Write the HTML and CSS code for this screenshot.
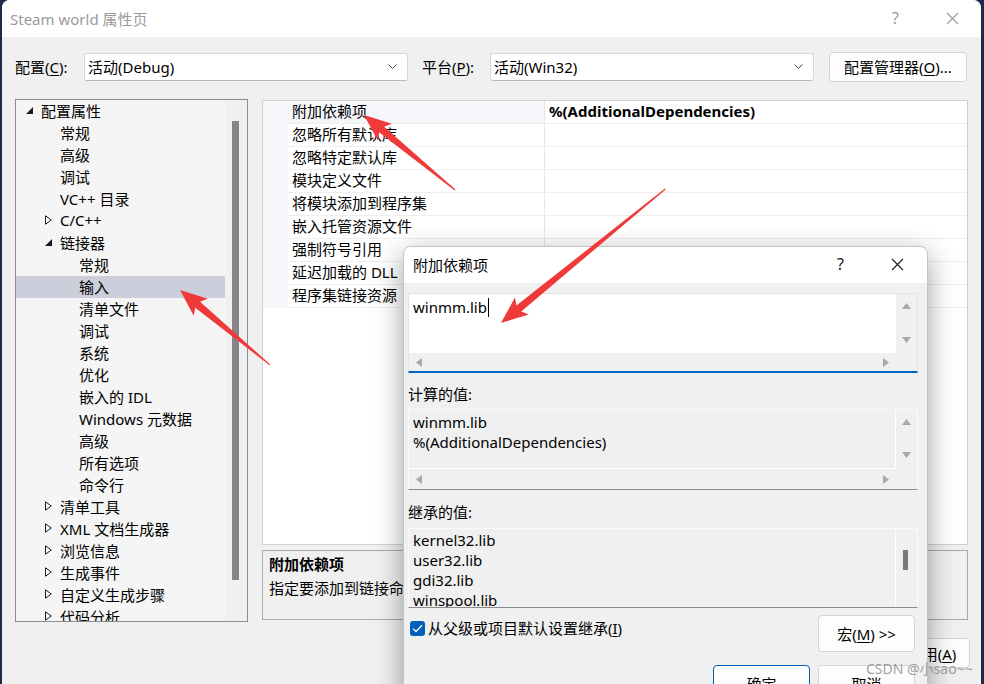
FILE: index.html
```html
<!DOCTYPE html>
<html>
<head>
<meta charset="utf-8">
<link rel="stylesheet" href="styles.css">
</head>
<body>
<div class="window">
  <div class="titlebar">
    <span class="title">Steam world 属性页</span>
    <div class="caption">
      <span class="cap-btn">?</span>
      <span class="cap-btn"><svg width="13" height="13" viewBox="0 0 13 13"><path d="M1 1 L12 12 M12 1 L1 12" stroke="currentColor" stroke-width="1.1" fill="none"/></svg></span>
    </div>
  </div>

  <div class="config-row">
    <span class="lbl lbl-cfg">配置(<u>C</u>):</span>
    <div class="combo"><span>活动(Debug)</span><svg class="chev" width="9" height="5" viewBox="0 0 9 5"><path d="M0.5 0.5 L4.5 4.5 L8.5 0.5" stroke="#444" stroke-width="1" fill="none"/></svg></div>
    <span class="lbl lbl-plat">平台(<u>P</u>):</span>
    <div class="combo"><span>活动(Win32)</span><svg class="chev" width="9" height="5" viewBox="0 0 9 5"><path d="M0.5 0.5 L4.5 4.5 L8.5 0.5" stroke="#444" stroke-width="1" fill="none"/></svg></div>
    <button class="btn btn-mgr">配置管理器(<u>O</u>)...</button>
  </div>

  <div class="main">
    <div class="tree">
      <div class="tree-items">
        <div class="ti l0"><span class="slot"><svg width="7" height="7" viewBox="0 0 7 7"><path d="M7 0 L7 7 L0 7 Z" fill="#1a1a1a"/></svg></span><span>配置属性</span></div>
        <div class="ti l1"><span class="slot"></span><span>常规</span></div>
        <div class="ti l1"><span class="slot"></span><span>高级</span></div>
        <div class="ti l1"><span class="slot"></span><span>调试</span></div>
        <div class="ti l1"><span class="slot"></span><span>VC++ 目录</span></div>
        <div class="ti l1"><span class="slot"><svg width="7" height="10" viewBox="0 0 7 10"><path d="M0.5 0.8 L6.3 5 L0.5 9.2 Z" fill="none" stroke="#1a1a1a" stroke-width="1"/></svg></span><span>C/C++</span></div>
        <div class="ti l1"><span class="slot"><svg width="7" height="7" viewBox="0 0 7 7"><path d="M7 0 L7 7 L0 7 Z" fill="#1a1a1a"/></svg></span><span>链接器</span></div>
        <div class="ti l2"><span class="slot"></span><span>常规</span></div>
        <div class="ti l2 sel"><span class="slot"></span><span>输入</span></div>
        <div class="ti l2"><span class="slot"></span><span>清单文件</span></div>
        <div class="ti l2"><span class="slot"></span><span>调试</span></div>
        <div class="ti l2"><span class="slot"></span><span>系统</span></div>
        <div class="ti l2"><span class="slot"></span><span>优化</span></div>
        <div class="ti l2"><span class="slot"></span><span>嵌入的 IDL</span></div>
        <div class="ti l2"><span class="slot"></span><span>Windows 元数据</span></div>
        <div class="ti l2"><span class="slot"></span><span>高级</span></div>
        <div class="ti l2"><span class="slot"></span><span>所有选项</span></div>
        <div class="ti l2"><span class="slot"></span><span>命令行</span></div>
        <div class="ti l1"><span class="slot"><svg width="7" height="10" viewBox="0 0 7 10"><path d="M0.5 0.8 L6.3 5 L0.5 9.2 Z" fill="none" stroke="#1a1a1a" stroke-width="1"/></svg></span><span>清单工具</span></div>
        <div class="ti l1"><span class="slot"><svg width="7" height="10" viewBox="0 0 7 10"><path d="M0.5 0.8 L6.3 5 L0.5 9.2 Z" fill="none" stroke="#1a1a1a" stroke-width="1"/></svg></span><span>XML 文档生成器</span></div>
        <div class="ti l1"><span class="slot"><svg width="7" height="10" viewBox="0 0 7 10"><path d="M0.5 0.8 L6.3 5 L0.5 9.2 Z" fill="none" stroke="#1a1a1a" stroke-width="1"/></svg></span><span>浏览信息</span></div>
        <div class="ti l1"><span class="slot"><svg width="7" height="10" viewBox="0 0 7 10"><path d="M0.5 0.8 L6.3 5 L0.5 9.2 Z" fill="none" stroke="#1a1a1a" stroke-width="1"/></svg></span><span>生成事件</span></div>
        <div class="ti l1"><span class="slot"><svg width="7" height="10" viewBox="0 0 7 10"><path d="M0.5 0.8 L6.3 5 L0.5 9.2 Z" fill="none" stroke="#1a1a1a" stroke-width="1"/></svg></span><span>自定义生成步骤</span></div>
        <div class="ti l1"><span class="slot"><svg width="7" height="10" viewBox="0 0 7 10"><path d="M0.5 0.8 L6.3 5 L0.5 9.2 Z" fill="none" stroke="#1a1a1a" stroke-width="1"/></svg></span><span>代码分析</span></div>
      </div>
      <div class="tree-scroll"><div class="tree-thumb"></div></div>
    </div>

    <div class="right">
      <div class="grid">
        <div class="row first"><div class="gut"></div><div class="name">附加依赖项</div><div class="val bold">%(AdditionalDependencies)</div></div>
        <div class="row"><div class="gut"></div><div class="name">忽略所有默认库</div><div class="val"></div></div>
        <div class="row"><div class="gut"></div><div class="name">忽略特定默认库</div><div class="val"></div></div>
        <div class="row"><div class="gut"></div><div class="name">模块定义文件</div><div class="val"></div></div>
        <div class="row"><div class="gut"></div><div class="name">将模块添加到程序集</div><div class="val"></div></div>
        <div class="row"><div class="gut"></div><div class="name">嵌入托管资源文件</div><div class="val"></div></div>
        <div class="row"><div class="gut"></div><div class="name">强制符号引用</div><div class="val"></div></div>
        <div class="row"><div class="gut"></div><div class="name">延迟加载的 DLL</div><div class="val"></div></div>
        <div class="row"><div class="gut"></div><div class="name">程序集链接资源</div><div class="val"></div></div>
      </div>
      <div class="desc">
        <div class="desc-title">附加依赖项</div>
        <div class="desc-text">指定要添加到链接命令行的附加项。</div>
      </div>
    </div>
  </div>

  <div class="footer">
    <button class="btn fbtn">确定</button>
    <button class="btn fbtn">取消</button>
    <button class="btn fbtn">应用(<u>A</u>)</button>
  </div>
</div>

<div class="dialog">
  <div class="dlg-title">
    <span class="dlg-name">附加依赖项</span>
    <div class="caption dlg-caption">
      <span class="cap-btn">?</span>
      <span class="cap-btn"><svg width="13" height="13" viewBox="0 0 13 13"><path d="M1 1 L12 12 M12 1 L1 12" stroke="currentColor" stroke-width="1.1" fill="none"/></svg></span>
    </div>
  </div>
  <div class="dlg-body">
    <div class="ebox">
      <div class="etext">winmm.lib<span class="caret"></span></div>
      <div class="vbar">
        <svg width="9" height="6" viewBox="0 0 9 6"><path d="M4.5 0 L9 6 L0 6 Z" fill="#a8a8a8"/></svg>
        <svg width="9" height="6" viewBox="0 0 9 6"><path d="M0 0 L9 0 L4.5 6 Z" fill="#a8a8a8"/></svg>
      </div>
      <div class="hbar">
        <svg width="6" height="9" viewBox="0 0 6 9"><path d="M0 4.5 L6 0 L6 9 Z" fill="#a8a8a8"/></svg>
        <svg width="6" height="9" viewBox="0 0 6 9"><path d="M6 4.5 L0 0 L0 9 Z" fill="#a8a8a8"/></svg>
      </div>
    </div>

    <div class="flabel flabel-1">计算的值:</div>
    <div class="cbox">
      <div class="ctext">winmm.lib<br>%(AdditionalDependencies)</div>
      <div class="vbar">
        <svg width="9" height="6" viewBox="0 0 9 6"><path d="M4.5 0 L9 6 L0 6 Z" fill="#a8a8a8"/></svg>
        <svg width="9" height="6" viewBox="0 0 9 6"><path d="M0 0 L9 0 L4.5 6 Z" fill="#a8a8a8"/></svg>
      </div>
      <div class="hbar">
        <svg width="6" height="9" viewBox="0 0 6 9"><path d="M0 4.5 L6 0 L6 9 Z" fill="#a8a8a8"/></svg>
        <svg width="6" height="9" viewBox="0 0 6 9"><path d="M6 4.5 L0 0 L0 9 Z" fill="#a8a8a8"/></svg>
      </div>
    </div>

    <div class="flabel flabel-2">继承的值:</div>
    <div class="ibox">
      <div class="itext">kernel32.lib<br>user32.lib<br>gdi32.lib<br>winspool.lib<br>comdlg32.lib</div>
      <div class="ivbar"><div class="ithumb"></div></div>
    </div>

    <div class="check-row">
      <span class="checkbox"><svg width="11" height="9" viewBox="0 0 11 9"><path d="M1 4.6 L4 7.5 L10 1.3" stroke="#fff" stroke-width="1.3" fill="none"/></svg></span>
      <span class="check-label">从父级或项目默认设置继承(<u>I</u>)</span>
      <button class="btn dbtn macro">宏(<u>M</u>) &gt;&gt;</button>
    </div>

    <div class="dlg-buttons">
      <button class="btn dbtn primary">确定</button>
      <button class="btn dbtn">取消</button>
    </div>
  </div>
</div>

<svg class="arrows" width="984" height="684" viewBox="0 0 984 684">
  <g transform="translate(364,115) rotate(39.5)">
    <path class="arrow" d="M0 0 L27 -11 L23 -3.8 L118 -0.6 L118 0.6 L23 3.8 L27 11 Z"/>
  </g>
  <g transform="translate(180,290) rotate(39.8)">
    <path class="arrow" d="M0 0 L27 -11 L23 -3.8 L117 -0.6 L117 0.6 L23 3.8 L27 11 Z"/>
  </g>
  <g transform="translate(501,323) rotate(-39.2)">
    <path class="arrow" d="M0 0 L27 -11 L23 -3.8 L212 -0.6 L212 0.6 L23 3.8 L27 11 Z"/>
  </g>
</svg>

<div class="watermark">CSDN @小sao~~</div>
</body>
</html>
```

FILE: styles.css
```css
* { box-sizing: border-box; }
html, body { margin: 0; padding: 0; }
body {
  width: 984px;
  height: 684px;
  overflow: hidden;
  position: relative;
  background: #1e2a46;
  font-family: "Noto Sans", "Noto Sans CJK SC", sans-serif;
  font-size: 15px;
  color: #000;
}
u { text-decoration: underline; text-underline-offset: 2px; }

.window {
  margin-left: 2px;
  width: 979px;
  height: 684px;
  background: #f0f0f0;
  border-radius: 8px 8px 0 0;
  overflow: hidden;
  display: flex;
  flex-direction: column;
}

.titlebar {
  height: 37px;
  flex: none;
  background: #fff;
  display: flex;
  align-items: center;
  padding-left: 8px;
  padding-bottom: 1px;
}
.title { flex: 1; color: #9a9a9a; }
.caption { display: flex; color: #9a9a9a; }
.cap-btn {
  width: 57px;
  height: 36px;
  display: flex;
  align-items: center;
  justify-content: center;
  font-size: 16px;
}

.config-row {
  margin-top: 15px;
  height: 30px;
  flex: none;
  display: flex;
  align-items: center;
  padding-left: 13px;
  padding-bottom: 1px;
}
.lbl-cfg { width: 69px; }
.lbl-plat { width: 68px; margin-left: 14px; }
.combo {
  width: 324px;
  height: 28px;
  background: #fff;
  border: 1px solid #d6d6d6;
  border-bottom-color: #b8b8b8;
  border-radius: 3px;
  display: flex;
  align-items: center;
  padding: 0 10px 0 3px;
  justify-content: space-between;
}
.btn {
  font-family: inherit;
  font-size: 15px;
  color: #000;
  background: #fdfdfd;
  border: 1px solid #d4d4d4;
  border-radius: 4px;
  padding: 0;
}
.btn-mgr { margin-left: 15px; width: 138px; height: 30px; }

.main {
  margin-top: 17px;
  height: 523px;
  flex: none;
  display: flex;
  padding-left: 13px;
}
.tree {
  width: 233px;
  height: 523px;
  border: 1px solid #8c8e94;
  background: #f5f5f5;
  display: flex;
  overflow: hidden;
}
.tree-items { width: 209px; }
.ti {
  height: 22px;
  display: flex;
  align-items: center;
  white-space: nowrap;
  padding-bottom: 2px;
}
.ti.l0 { padding-left: 10px; }
.ti.l1 { padding-left: 29px; }
.ti.l2 { padding-left: 48px; }
.ti.sel { background: #cccedb; }
.slot { width: 15px; flex: none; display: flex; align-items: center; }
.tree-scroll {
  width: 22px;
  background: #f0f0f0;
  padding: 21px 0 0 7px;
}
.tree-thumb { width: 7px; height: 459px; background: #858585; }

.right {
  margin-left: 14px;
  width: 706px;
  display: flex;
  flex-direction: column;
}
.grid {
  margin-top: 1px;
  height: 445px;
  border: 1px solid #d0d0d0;
  background: #fff;
}
.row {
  height: 23px;
  display: flex;
}
.gut { width: 25px; background: #f4f6fa; flex: none; }
.name {
  width: 257px;
  padding-left: 4px;
  border-right: 1px solid #e6e6e6;
  border-bottom: 1px solid #eeeeee;
  line-height: 21px;
  white-space: nowrap;
  overflow: hidden;
}
.val {
  flex: 1;
  padding-left: 4px;
  border-bottom: 1px solid #eeeeee;
  line-height: 21px;
}
.row.first .name { background: #f4f6fa; }
.bold { font-weight: bold; }
.desc {
  margin-top: 5px;
  height: 70px;
  border: 1px solid #a9a9a9;
  padding: 1px 6px;
  line-height: 24px;
  white-space: nowrap;
  overflow: hidden;
}
.desc-title { font-weight: bold; }

.footer {
  margin-top: 16px;
  display: flex;
  justify-content: flex-end;
  gap: 6px;
  padding-right: 11px;
}
.fbtn { width: 76px; height: 30px; }

.dialog {
  position: absolute;
  left: 403px;
  top: 246px;
  width: 525px;
  height: 470px;
  background: #f0f0f0;
  border: 1px solid #c4c4c4;
  border-radius: 8px;
  box-shadow: 0 8px 28px rgba(0, 0, 0, 0.38);
  overflow: hidden;
}
.dlg-title {
  height: 36px;
  background: #fff;
  display: flex;
  align-items: center;
  padding-left: 9px;
  padding-bottom: 2px;
}
.dlg-name { flex: 1; }
.dlg-caption { color: #1a1a1a; padding-right: 1px; }
.dlg-caption .cap-btn { height: 34px; }
.dlg-body { padding: 10px 9px 0 4px; }

.ebox {
  width: 510px;
  height: 80px;
  border: 1px solid #e4e4e4;
  border-bottom: 2px solid #0067c0;
  display: grid;
  grid-template-columns: 1fr 21px;
  grid-template-rows: 59px 1fr;
}
.etext {
  background: #fff;
  padding: 3px 4px;
  line-height: 20px;
}
.caret {
  display: inline-block;
  width: 1px;
  height: 19px;
  background: #000;
  vertical-align: -4px;
  margin-left: 1px;
}
.vbar {
  background: #f0f0f0;
  display: flex;
  flex-direction: column;
  justify-content: space-between;
  align-items: center;
  padding: 9px 0 10px;
}
.hbar {
  grid-column: 1 / 3;
  display: flex;
  align-items: center;
  justify-content: space-between;
  padding: 0 28px 0 7px;
}

.flabel { line-height: 20px; }
.flabel-1 { margin-top: 11px; margin-bottom: 5px; }
.flabel-2 { margin-top: 12px; margin-bottom: 6px; }

.cbox {
  width: 510px;
  height: 81px;
  border: 1px solid #fafafa;
  border-bottom-color: #8a8a8a;
  display: grid;
  grid-template-columns: 1fr 21px;
  grid-template-rows: 59px 1fr;
}
.ctext {
  padding: 2px 4px;
  line-height: 20px;
  border-right: 1px solid #fff;
  border-bottom: 1px solid #fff;
  white-space: nowrap;
}
.cbox .vbar { padding: 9px 0 11px; }

.ibox {
  width: 510px;
  height: 80px;
  border: 1px solid #fafafa;
  border-bottom-color: #8a8a8a;
  display: flex;
  overflow: hidden;
}
.itext {
  flex: 1;
  padding: 1px 4px;
  line-height: 20px;
  border-right: 1px solid #fff;
}
.ivbar { width: 21px; padding: 21px 0 0 7px; }
.ithumb { width: 5px; height: 20px; background: #7a7a7a; }

.check-row {
  margin-top: 7px;
  height: 37px;
  display: flex;
  align-items: flex-start;
  padding-left: 2px;
}
.checkbox {
  width: 15px;
  height: 15px;
  border-radius: 3px;
  background: #005fb8;
  display: flex;
  align-items: center;
  justify-content: center;
  margin: 6px 3px 0 0;
}
.check-label { flex: 1; line-height: 20px; margin-top: 3px; }
.dbtn { width: 97px; height: 37px; }
.macro { margin-right: 3px; }
.dlg-buttons {
  margin-top: 13px;
  display: flex;
  justify-content: flex-end;
  gap: 8px;
  padding-right: 3px;
}
.primary { border-color: #005fb8; }

.arrows {
  position: absolute;
  left: 0;
  top: 0;
  pointer-events: none;
}
.arrow { fill: #f03a3a; }

.watermark {
  position: absolute;
  left: 866px;
  top: 658px;
  font-size: 14px;
  color: rgba(140, 140, 140, 0.85);
  white-space: nowrap;
}
```
